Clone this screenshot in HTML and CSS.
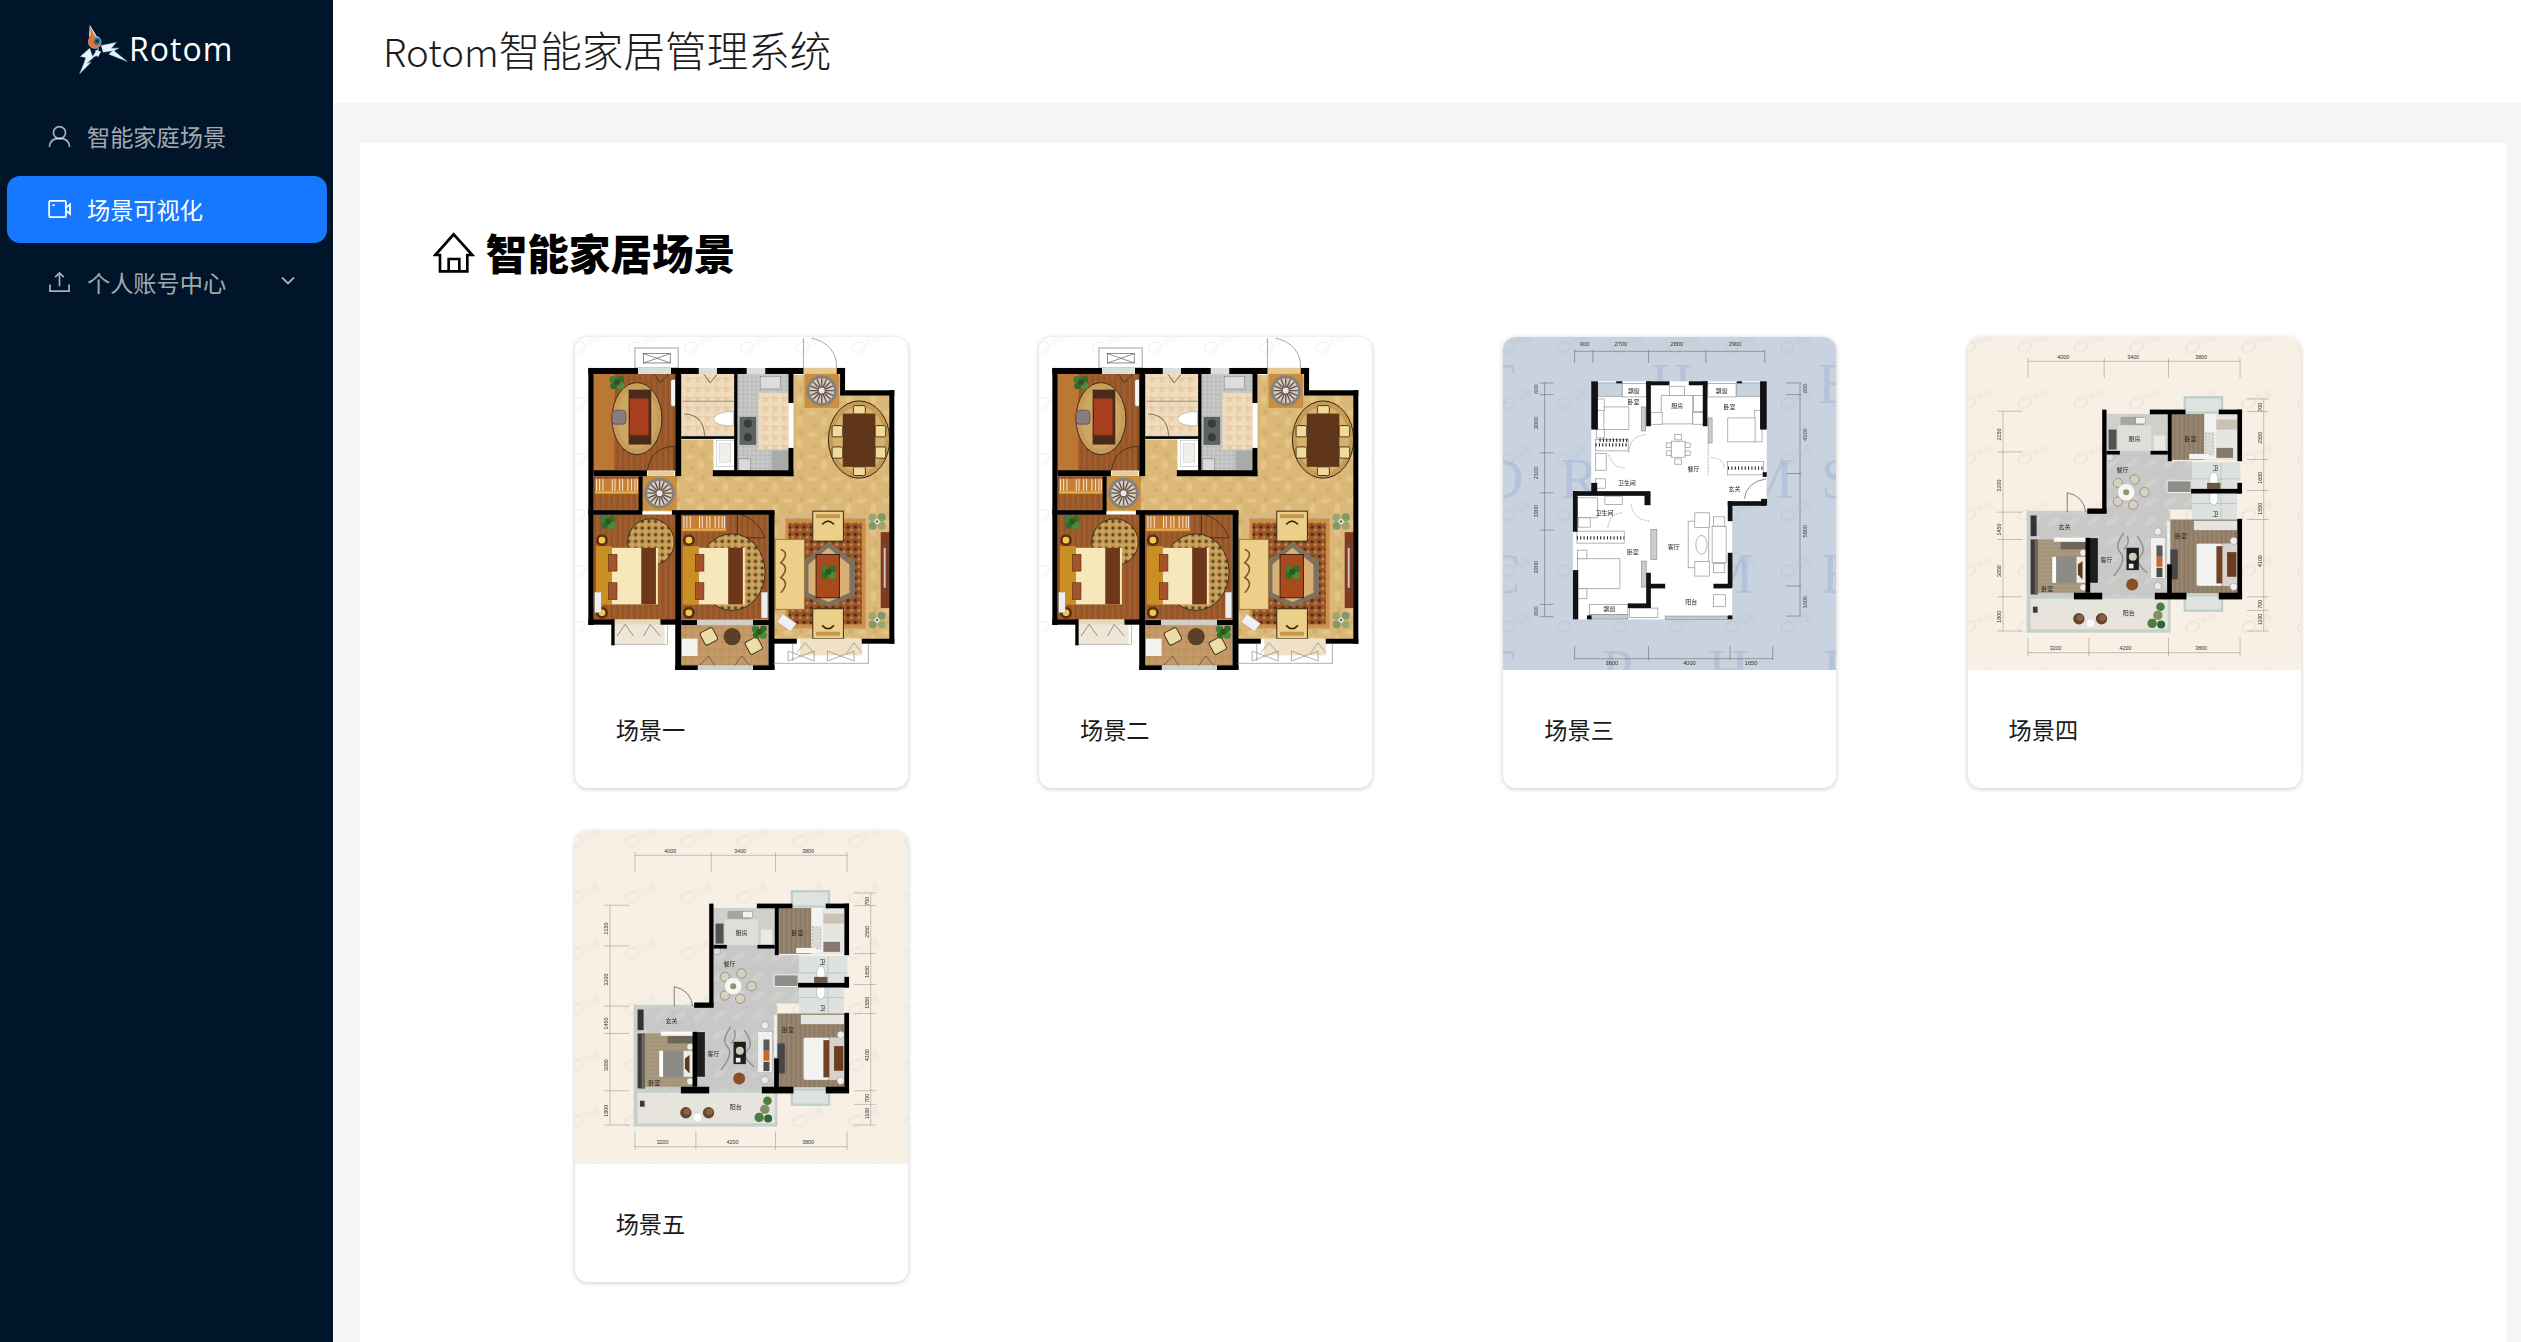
FILE: index.html
```html
<!DOCTYPE html>
<html lang="zh-CN">
<head>
<meta charset="utf-8">
<title>Rotom智能家居管理系统</title>
<link rel="stylesheet" href="styles.css">
</head>
<body>
<svg class="defs" width="0" height="0" aria-hidden="true">
  <defs>
    <pattern id="wood" width="17" height="40" patternUnits="userSpaceOnUse">
      <rect width="17" height="40" fill="#9c5a2b"/><rect width="3" height="40" fill="#8c4f25"/><rect x="9" width="2" height="40" fill="#a9642f"/>
    </pattern>
    <pattern id="tile" width="29" height="29" patternUnits="userSpaceOnUse">
      <rect width="29" height="29" fill="#f0dcbc"/><rect x="2" y="2" width="12" height="12" fill="#e8cca4"/><path d="M0 0H29M0 0V29" stroke="#d2b28a" stroke-width="2"/>
    </pattern>
    <pattern id="floral" width="74" height="66" patternUnits="userSpaceOnUse">
      <rect width="74" height="66" fill="#dcb878"/>
      <ellipse cx="18" cy="16" rx="14" ry="7" fill="#e4c588"/><ellipse cx="52" cy="40" rx="9" ry="14" fill="#e4c588"/><ellipse cx="24" cy="50" rx="7" ry="5" fill="#d2ad69"/><ellipse cx="58" cy="11" rx="6" ry="8" fill="#d2ad69"/>
    </pattern>
    <pattern id="granite" width="13" height="13" patternUnits="userSpaceOnUse">
      <rect width="13" height="13" fill="#c3c3c1"/><circle cx="3" cy="4" r="2" fill="#a8a8a6"/><circle cx="9" cy="10" r="2" fill="#dadad8"/>
    </pattern>
    <pattern id="rug" width="22" height="22" patternUnits="userSpaceOnUse">
      <rect width="22" height="22" fill="#99552a"/><circle cx="6" cy="7" r="5" fill="#55291a"/><circle cx="16" cy="16" r="4" fill="#c98d4c"/>
    </pattern>
    <pattern id="pebble" width="20" height="20" patternUnits="userSpaceOnUse">
      <rect width="20" height="20" fill="#c99a52"/><circle cx="6" cy="6" r="5" fill="#4a4328"/><circle cx="16" cy="15" r="3" fill="#dcb974"/>
    </pattern>
    <pattern id="marble" width="58" height="58" patternUnits="userSpaceOnUse">
      <rect width="58" height="58" fill="#c8c9c7"/><ellipse cx="20" cy="26" rx="24" ry="9" fill="#cfd0ce" transform="rotate(-35 20 26)"/><path d="M0 0H58M0 0V58" stroke="#bebfbd" stroke-width="1"/>
    </pattern>
    <pattern id="balcony-tile" width="22" height="22" patternUnits="userSpaceOnUse">
      <rect width="22" height="22" fill="#c49b68"/><path d="M0 0H22M0 0V22" stroke="#a67c4b" stroke-width="2"/>
    </pattern>
    <pattern id="grey-wood" width="14" height="24" patternUnits="userSpaceOnUse">
      <rect width="14" height="24" fill="#93806a"/><rect width="2" height="24" fill="#857360"/><rect x="7" width="2" height="24" fill="#a08e78"/>
    </pattern>
    <pattern id="grey-wood-h" width="24" height="12" patternUnits="userSpaceOnUse">
      <rect width="24" height="12" fill="#a8997f"/><rect width="24" height="2" fill="#968770"/>
    </pattern>
    <pattern id="mark" x="20" y="20" width="168" height="168" patternUnits="userSpaceOnUse">
      <g transform="rotate(-25 40 60)" class="mark-group">
        <ellipse cx="34" cy="60" rx="20" ry="15"/>
        <text x="60" y="68" class="mark-text">乐居</text>
      </g>
    </pattern>

    <g id="plant">
      <circle cx="-12" cy="-8" r="11" fill="#3f7d35"/><circle cx="12" cy="-9" r="10" fill="#2f6d2d"/><circle cx="-10" cy="11" r="10" fill="#2f6d2d"/><circle cx="11" cy="11" r="11" fill="#4a8c3c"/><circle r="9" fill="#23591f"/>
    </g>
    <g id="plant-pale">
      <circle cx="-14" cy="-12" r="12" fill="#9aa771"/><circle cx="14" cy="-13" r="12" fill="#7f9a68"/><circle cx="-13" cy="13" r="12" fill="#7f9a68"/><circle cx="14" cy="13" r="12" fill="#9aa771"/><circle r="8" fill="#dfe2c9"/><circle r="3" fill="#333"/>
    </g>
    <g id="wheel">
      <rect x="-52" y="-52" width="104" height="104" fill="#c98f3f"/>
      <circle r="46" fill="#8a7f80"/><circle r="37" fill="#d9cdbb"/>
      <path d="M-37 0H37M0-37V37M-26-26L26 26M-26 26L26-26M-14-34L14 34M14-34L-14 34M-34-14L34 14M-34 14L34-14" stroke="#5f5053" stroke-width="4"/>
      <circle r="9" fill="#efe6d7"/>
    </g>
    <g id="hangers">
      <rect x="0" y="0" width="132" height="46" fill="#c97f33"/>
      <path d="M5 0V36M14 0V36M24 0V36M52 0V36M60 0V36M74 0V36M83 0V36M99 0V36M110 0V36M120 0V36M127 0V36" stroke="#f2eadc" stroke-width="3"/>
      <rect y="38" width="132" height="5" fill="#e8b845"/>
    </g>
    <g id="bed1">
      <rect x="0" y="0" width="48" height="176" fill="#c98f24"/>
      <circle cx="18" cy="-18" r="14" fill="#f3c752" stroke="#5b3010" stroke-width="8"/><circle cx="18" cy="200" r="14" fill="#f3c752" stroke="#5b3010" stroke-width="8"/>
      <rect x="48" y="5" width="138" height="170" fill="#f6e8bb"/>
      <rect x="136" y="5" width="44" height="170" fill="#6d3719"/>
      <rect x="38" y="25" width="25" height="50" fill="#a4532a" stroke="#5c2f16" stroke-width="2"/>
      <rect x="38" y="110" width="25" height="50" fill="#a4532a" stroke="#5c2f16" stroke-width="2"/>
    </g>
    <g id="armchair">
      <rect width="92" height="90" fill="#ecd08a" stroke="#3c2a14" stroke-width="3"/>
      <rect x="10" y="9" width="72" height="12" fill="#c49a4f"/>
      <path d="M28 40 Q46 20 64 40" fill="none" stroke="#3c2a14" stroke-width="5"/>
    </g>
    <g id="chair4">
      <circle r="17" fill="#65452f"/><circle cx="3" cy="-3" r="10" fill="#8a6344"/>
    </g>
    <g id="bay-win">
      <rect width="112" height="46" fill="#dfe3df" stroke="#bfd0cc" stroke-width="7"/>
    </g>

    <symbol id="plan-one" viewBox="44 52 1000 1000">
      <rect x="44" y="52" width="1000" height="1000" fill="#fff"/>
      <rect x="44" y="52" width="1000" height="1000" fill="url(#mark)"/>
      <rect x="224" y="85" width="130" height="60" fill="#fff" stroke="#b8b8b8" stroke-width="4"/>
      <rect x="250" y="102" width="80" height="28" fill="#fff" stroke="#555" stroke-width="2"/>
      <path d="M250 102L330 130M330 102L250 130" stroke="#555" stroke-width="2"/>
      <path d="M730 55V145M755 55Q830 75 830 145" fill="none" stroke="#aaa" stroke-width="3"/>
      <path d="M363 360H460V468H700V165H840V228H990V958H640V575H245V470H363Z" fill="url(#floral)"/>
      <rect x="100" y="163" width="245" height="290" fill="url(#wood)"/>
      <rect x="100" y="163" width="62" height="290" fill="#bd7734"/>
      <rect x="100" y="470" width="136" height="103" fill="url(#wood)"/>
      <rect x="100" y="585" width="246" height="316" fill="url(#wood)"/>
      <rect x="363" y="585" width="262" height="316" fill="url(#wood)"/>
      <rect x="363" y="163" width="160" height="188" fill="url(#tile)"/>
      <rect x="532" y="163" width="153" height="290" fill="url(#granite)"/>
      <rect x="595" y="220" width="90" height="170" fill="url(#tile)"/>
      <rect x="363" y="917" width="262" height="122" fill="url(#balcony-tile)"/>
      <rect x="163" y="915" width="150" height="60" fill="#f0e6d7"/>
      <path d="M153 975H322V918" fill="none" stroke="#bbb" stroke-width="3"/>
      <ellipse cx="230" cy="297" rx="75" ry="108" fill="#c79c5a" stroke="#3b2d22" stroke-width="3"/>
      <ellipse cx="230" cy="297" rx="60" ry="92" fill="#cda761"/>
      <rect x="205" y="210" width="68" height="165" fill="#4a2b1b"/>
      <rect x="209" y="237" width="56" height="110" fill="#a73f1f"/>
      <rect x="155" y="272" width="42" height="42" rx="10" fill="#8a7c7b" stroke="#4c4140" stroke-width="2"/>
      <use href="#plant" x="170" y="188"/>
      <rect x="332" y="180" width="22" height="80" rx="6" fill="#f4f4f0" stroke="#777"/>
      <path d="M278 158L300 190L330 158M262 452Q270 385 342 380V452" fill="none" stroke="#2a1c10" stroke-width="2"/>
      <path d="M367 245H522" stroke="#8a9a8a" stroke-width="3"/>
      <path d="M372 283Q430 285 433 348M432 165L450 190L470 165" fill="none" stroke="#333" stroke-width="2"/>
      <path d="M460 300Q465 276 520 276V318Q470 322 460 300Z" fill="#fff" stroke="#666"/>
      <rect x="468" y="362" width="54" height="78" fill="#fff" stroke="#888"/>
      <rect x="478" y="372" width="34" height="56" fill="#f0efe9" stroke="#aaa"/>
      <rect x="538" y="292" width="50" height="84" fill="#5c6264"/>
      <circle cx="563" cy="312" r="12" fill="#363b3d"/><circle cx="563" cy="353" r="12" fill="#363b3d"/>
      <rect x="634" y="393" width="52" height="58" fill="#a9aaaa"/>
      <rect x="534" y="418" width="38" height="34" fill="#d9d9d5" stroke="#444"/>
      <rect x="600" y="170" width="60" height="38" fill="#ddd" stroke="#555"/>
      <ellipse cx="897" cy="360" rx="92" ry="116" fill="#c79b53" stroke="#33261a" stroke-width="3"/>
      <ellipse cx="897" cy="360" rx="78" ry="100" fill="#d7b26c"/>
      <g fill="#eeda9f" stroke="#4c3820" stroke-width="3">
        <rect x="880" y="258" width="36" height="26" rx="5"/><rect x="880" y="442" width="36" height="26" rx="5"/>
        <rect x="816" y="318" width="32" height="34" rx="5"/><rect x="816" y="382" width="32" height="34" rx="5"/>
        <rect x="945" y="318" width="32" height="34" rx="5"/><rect x="945" y="382" width="32" height="34" rx="5"/>
      </g>
      <rect x="848" y="282" width="98" height="160" fill="#60361b"/>
      <use href="#wheel" x="785" y="213"/>
      <use href="#wheel" x="298" y="521"/>
      <use href="#hangers" x="104" y="478"/>
      <use href="#hangers" x="366" y="590"/>
      <path d="M532 582Q590 595 615 655H532Z" fill="none" stroke="#2a1c10" stroke-width="2"/>
      <circle cx="272" cy="668" r="70" fill="url(#pebble)" stroke="#3b2d22" stroke-width="3"/>
      <use href="#plant" x="143" y="607"/>
      <use href="#bed1" x="107" y="680"/>
      <rect x="103" y="818" width="20" height="62" fill="#eee" stroke="#777"/>
      <ellipse cx="515" cy="758" rx="100" ry="115" fill="url(#pebble)" stroke="#3b2d22" stroke-width="3"/>
      <use href="#bed1" x="368" y="680"/>
      <rect x="603" y="818" width="20" height="78" fill="#eee" stroke="#777"/>
      <circle cx="516" cy="952" r="26" fill="#5a4029"/>
      <rect x="425" y="930" width="42" height="42" rx="7" fill="#ecdca8" stroke="#4c3820" stroke-width="3" transform="rotate(-28 446 951)"/>
      <rect x="560" y="958" width="42" height="42" rx="7" fill="#ecdca8" stroke="#4c3820" stroke-width="3" transform="rotate(-28 581 979)"/>
      <rect x="365" y="958" width="47" height="52" fill="#f3f3f0"/>
      <use href="#plant" x="598" y="937"/>
      <path d="M417 1040L445 1010L465 1040M522 1040L545 1010L570 1040" fill="none" stroke="#444" stroke-width="2"/>
      <rect x="676" y="598" width="240" height="328" fill="#cd8f46" stroke="#b9a27c" stroke-width="3"/>
      <rect x="685" y="610" width="220" height="305" fill="url(#rug)"/>
      <path d="M805 668L885 725V830L805 862L730 830V725Z" fill="#7f705f"/>
      <path d="M805 685L868 735V820L805 848L745 820V735Z" fill="#d6b076"/>
      <rect x="768" y="705" width="70" height="130" fill="#a84a1c" stroke="#3c1f10" stroke-width="3"/>
      <use href="#plant" x="805" y="757"/>
      <rect x="645" y="660" width="88" height="210" fill="#ecd08a" stroke="#9c7c41" stroke-width="3"/>
      <path d="M662 690Q690 700 662 730Q690 745 662 775Q690 790 662 820" fill="none" stroke="#7a5c2a" stroke-width="5"/>
      <use href="#armchair" x="758" y="575"/>
      <g transform="translate(850 958) rotate(180)"><use href="#armchair"/></g>
      <rect x="962" y="638" width="27" height="228" fill="#7c3b23"/>
      <rect x="971" y="685" width="6" height="120" fill="#c8c8c8"/>
      <use href="#plant-pale" x="951" y="606"/>
      <use href="#plant-pale" x="951" y="902"/>
      <rect x="655" y="895" width="50" height="30" fill="#f0f0ee" stroke="#888" transform="rotate(35 680 910)"/>
      <rect x="720" y="958" width="185" height="50" fill="#efe0c6"/>
      <g fill="#000">
        <rect x="84" y="145" width="16" height="772"/>
        <rect x="84" y="145" width="150" height="18"/>
        <rect x="332" y="145" width="84" height="18"/>
        <rect x="470" y="145" width="90" height="18"/>
        <rect x="615" y="145" width="240" height="18"/>
        <rect x="345" y="145" width="18" height="325"/>
        <rect x="363" y="350" width="160" height="8"/>
        <rect x="522" y="145" width="10" height="325"/>
        <rect x="458" y="452" width="242" height="18"/>
        <rect x="685" y="145" width="15" height="105"/>
        <rect x="685" y="385" width="15" height="85"/>
        <rect x="100" y="452" width="160" height="18"/>
        <rect x="235" y="470" width="12" height="105"/>
        <rect x="84" y="572" width="162" height="14"/>
        <rect x="335" y="572" width="308" height="14"/>
        <rect x="345" y="575" width="18" height="340"/>
        <rect x="625" y="575" width="18" height="475"/>
        <rect x="345" y="900" width="18" height="152"/>
        <rect x="345" y="1038" width="68" height="14"/>
        <rect x="578" y="1038" width="65" height="14"/>
        <rect x="84" y="900" width="80" height="16"/>
        <rect x="300" y="900" width="60" height="16"/>
        <rect x="153" y="900" width="10" height="78"/>
        <rect x="363" y="902" width="48" height="15"/>
        <rect x="578" y="902" width="50" height="15"/>
        <rect x="840" y="145" width="15" height="83"/>
        <rect x="855" y="212" width="148" height="16"/>
        <rect x="988" y="212" width="15" height="761"/>
        <rect x="640" y="958" width="70" height="15"/>
        <rect x="905" y="958" width="98" height="15"/>
      </g>
      <g fill="#d9e0da">
        <rect x="234" y="145" width="98" height="18"/><rect x="416" y="145" width="54" height="18"/><rect x="560" y="145" width="55" height="18"/>
      </g>
      <rect x="730" y="145" width="100" height="18" fill="#e5c98f"/>
      <rect x="163" y="900" width="137" height="16" fill="#e8d9bd"/>
      <rect x="412" y="902" width="166" height="15" fill="#cfcfc8"/>
      <rect x="413" y="1038" width="165" height="14" fill="#c9d5d0"/>
      <rect x="262" y="455" width="80" height="14" fill="#e4cf96"/>
      <path d="M170 950L195 915L220 950M250 950L270 915L300 950" fill="none" stroke="#666" stroke-width="2"/>
      <g fill="none" stroke="#888" stroke-width="2">
        <path d="M640 1032H925V973M698 973V1025"/>
        <path d="M710 1000L735 970L760 1000M684 1025V995L762 1025V995ZM802 1025V995L882 1025V995ZM860 1000L882 970L905 1000"/>
      </g>
    </symbol>

    <symbol id="plan-three" viewBox="40 52 1000 1000">
      <rect x="40" y="52" width="1000" height="1000" fill="#c9d3df"/>
      <g class="plan3-letters">
        <text x="-28" y="250">T</text><text x="484" y="250">H</text><text x="985" y="250">E</text>
        <text x="-22" y="535">D</text><text x="212" y="535">R</text><text x="760" y="535">M</text><text x="995" y="535">S</text>
        <text x="-22" y="822">C</text><text x="640" y="822">M</text><text x="995" y="822">E</text>
        <text x="-28" y="1108">T</text><text x="335" y="1108">P</text><text x="655" y="1108">H</text><text x="1000" y="1108">E</text>
      </g>
      <rect x="40" y="52" width="1000" height="1000" fill="url(#mark)"/>
      <g fill="none" stroke="#6f7881" stroke-width="2">
        <path d="M255 95H826M255 90V130M310 90V130M477 90V130M649 90V130M826 90V130"/>
        <path d="M165 190V892M150 190H192M150 225H192M150 400H192M150 520H192M150 632H192M150 855H192M150 892H192"/>
        <path d="M932 190V890M890 190H936M890 225H936M890 462H936M890 800H936M890 890H936"/>
        <path d="M255 1018H850M255 980V1022M477 980V1022M722 980V1022M850 980V1022"/>
      </g>
      <g class="plan-dim">
        <text x="285" y="80">900</text><text x="394" y="80">2700</text><text x="562" y="80">2800</text><text x="737" y="80">2900</text>
        <text x="367" y="1037">3600</text><text x="600" y="1037">4000</text><text x="785" y="1037">1650</text>
        <text transform="translate(145 208) rotate(-90)">600</text>
        <text transform="translate(145 310) rotate(-90)">3000</text>
        <text transform="translate(145 460) rotate(-90)">2100</text>
        <text transform="translate(145 575) rotate(-90)">1900</text>
        <text transform="translate(145 743) rotate(-90)">3900</text>
        <text transform="translate(145 875) rotate(-90)">600</text>
        <text transform="translate(954 206) rotate(-90)">600</text>
        <text transform="translate(954 345) rotate(-90)">4100</text>
        <text transform="translate(954 635) rotate(-90)">5800</text>
        <text transform="translate(954 848) rotate(-90)">1600</text>
      </g>
      <path d="M305 185H832V558H728V900H250V517H305Z" fill="#fff"/>
      <g fill="#fff" stroke="#8a8f92" stroke-width="2">
        <rect x="325" y="190" width="73" height="40" fill="#c9d3df"/>
        <rect x="398" y="192" width="72" height="40"/>
        <rect x="655" y="192" width="85" height="40"/>
        <rect x="742" y="190" width="72" height="40" fill="#c9d3df"/>
        <rect x="515" y="228" width="95" height="85"/>
        <rect x="540" y="200" width="45" height="28"/>
        <rect x="612" y="228" width="30" height="48"/>
        <rect x="484" y="278" width="34" height="36"/>
        <rect x="610" y="278" width="32" height="36"/>
        <rect x="456" y="262" width="12" height="72" fill="#ccc"/>
        <rect x="656" y="295" width="12" height="75" fill="#ccc"/>
        <rect x="343" y="262" width="75" height="68"/>
        <rect x="320" y="238" width="24" height="35"/>
        <rect x="320" y="330" width="24" height="25"/>
        <rect x="796" y="272" width="22" height="95"/>
        <rect x="715" y="295" width="82" height="72"/>
        <rect x="318" y="360" width="98" height="34"/>
        <rect x="714" y="426" width="108" height="40"/>
        <rect x="318" y="402" width="32" height="50"/>
        <rect x="318" y="478" width="30" height="28"/>
        <rect x="264" y="535" width="60" height="60"/>
        <rect x="346" y="530" width="52" height="25"/>
        <rect x="266" y="595" width="36" height="28"/>
        <rect x="262" y="635" width="142" height="36"/>
        <rect x="264" y="718" width="127" height="90"/>
        <rect x="264" y="692" width="28" height="26"/>
        <rect x="264" y="808" width="28" height="30"/>
        <rect x="456" y="725" width="14" height="78" fill="#ccc"/>
        <rect x="484" y="630" width="18" height="90" fill="#ccc"/>
        <rect x="596" y="605" width="62" height="140"/>
        <rect x="616" y="580" width="44" height="44"/>
        <rect x="616" y="726" width="44" height="44"/>
        <rect x="668" y="620" width="42" height="110"/>
        <rect x="672" y="592" width="34" height="28"/>
        <rect x="672" y="732" width="34" height="28"/>
        <ellipse cx="636" cy="676" rx="17" ry="28"/>
        <rect x="545" y="365" width="42" height="48"/>
        <rect x="530" y="370" width="15" height="14"/><rect x="530" y="394" width="15" height="14"/>
        <rect x="587" y="370" width="15" height="14"/><rect x="587" y="394" width="15" height="14"/>
        <rect x="556" y="345" width="20" height="16"/><rect x="556" y="418" width="20" height="16"/>
        <rect x="672" y="826" width="36" height="36"/>
        <rect x="300" y="855" width="115" height="30"/>
        <rect x="420" y="866" width="85" height="28"/>
        <rect x="527" y="890" width="188" height="10" fill="#c9c9c9"/>
        <rect x="300" y="885" width="115" height="14" fill="#c9c9c9"/>
      </g>
      <path d="M330 362H416M318 376H416M262 655H404M716 446H822" stroke="#111" stroke-width="10" stroke-dasharray="3 7" fill="none"/>
      <g fill="none" stroke="#777" stroke-width="2" stroke-dasharray="4 3">
        <path d="M468 345Q420 350 418 400M358 405Q370 445 405 445M425 555Q430 600 482 605M665 415Q700 415 705 445M355 625Q360 580 400 580"/>
        <path d="M656 370V470"/>
      </g>
      <path d="M830 478Q770 488 765 538" fill="none" stroke="#555" stroke-width="2"/>
      <g fill="#111">
        <rect x="305" y="185" width="20" height="145"/>
        <rect x="380" y="185" width="18" height="6"/>
        <rect x="305" y="490" width="18" height="35"/>
        <rect x="250" y="515" width="233" height="14"/>
        <rect x="465" y="527" width="18" height="30"/>
        <rect x="250" y="515" width="14" height="122"/>
        <rect x="250" y="752" width="16" height="148"/>
        <rect x="470" y="185" width="14" height="135"/>
        <rect x="470" y="185" width="70" height="12"/>
        <rect x="598" y="185" width="56" height="12"/>
        <rect x="640" y="185" width="14" height="135"/>
        <rect x="812" y="185" width="20" height="145"/>
        <rect x="742" y="185" width="16" height="6"/>
        <rect x="820" y="458" width="12" height="14"/>
        <rect x="815" y="538" width="18" height="20"/>
        <rect x="715" y="545" width="115" height="14"/>
        <rect x="715" y="545" width="14" height="60"/>
        <rect x="715" y="700" width="14" height="105"/>
        <rect x="482" y="793" width="45" height="14"/>
        <rect x="672" y="793" width="55" height="14"/>
        <rect x="470" y="760" width="14" height="105"/>
        <rect x="415" y="852" width="68" height="14"/>
        <rect x="292" y="888" width="14" height="12"/>
        <rect x="715" y="888" width="14" height="12"/>
      </g>
      <g class="plan-label">
        <text x="433" y="221">飘窗</text><text x="697" y="221">飘窗</text><text x="360" y="875">飘窗</text>
        <text x="432" y="254">卧室</text><text x="563" y="264">厨房</text><text x="720" y="269">卧室</text>
        <text x="612" y="453">餐厅</text><text x="412" y="496">卫生间</text><text x="735" y="516">玄关</text>
        <text x="345" y="586">卫生间</text><text x="430" y="704">卧室</text><text x="553" y="690">客厅</text><text x="605" y="854">阳台</text>
      </g>
    </symbol>

    <symbol id="plan-four" viewBox="52 52 1000 1000">
      <rect x="52" y="52" width="1000" height="1000" fill="#f8f0e4"/>
      <rect x="52" y="52" width="1000" height="1000" fill="url(#mark)"/>
      <g fill="none" stroke="#8d8a82" stroke-width="1.5">
        <path d="M232 125H870M232 115V175M461 115V175M654 115V175M869 115V175"/>
        <path d="M232 1000H870M232 955V1010M415 955V1010M654 955V1010M869 955V1010"/>
        <path d="M157 275V935M140 275H215M140 397H215M140 578H215M140 660H215M140 832H215M140 935H215"/>
        <path d="M940 238V935M890 238H955M890 276H955M890 420H955M890 513H955M890 600H955M890 832H955M890 873H955M890 935H955"/>
      </g>
      <g class="plan-dim plan-dim-small">
        <text x="338" y="118">4000</text><text x="548" y="118">3400</text><text x="752" y="118">3800</text>
        <text x="315" y="991">3200</text><text x="525" y="991">4200</text><text x="752" y="991">3800</text>
        <text transform="translate(151 345) rotate(-90)">2150</text>
        <text transform="translate(151 498) rotate(-90)">3200</text>
        <text transform="translate(151 630) rotate(-90)">1450</text>
        <text transform="translate(151 755) rotate(-90)">3050</text>
        <text transform="translate(151 892) rotate(-90)">1800</text>
        <text transform="translate(935 263) rotate(-90)">700</text>
        <text transform="translate(935 355) rotate(-90)">2550</text>
        <text transform="translate(935 475) rotate(-90)">1650</text>
        <text transform="translate(935 568) rotate(-90)">1550</text>
        <text transform="translate(935 725) rotate(-90)">4100</text>
        <text transform="translate(935 855) rotate(-90)">700</text>
        <text transform="translate(935 900) rotate(-90)">1100</text>
      </g>
      <rect x="228" y="574" width="432" height="366" fill="#c7d0cc"/>
      <rect x="240" y="838" width="412" height="92" fill="#e6e4dc"/>
      <path d="M468 283H655V425H725V570H655V830H240V586H468Z" fill="url(#marble)"/>
      <rect x="468" y="283" width="184" height="112" fill="#cfcfcc"/>
      <rect x="502" y="318" width="100" height="76" fill="#dfdedb"/>
      <rect x="474" y="330" width="24" height="60" fill="#54524e"/>
      <rect x="510" y="292" width="70" height="24" fill="#a7a5a1"/>
      <rect x="555" y="293" width="30" height="20" fill="#f2f2ef" stroke="#555"/>
      <rect x="610" y="348" width="34" height="44" fill="#e9e9e7"/>
      <rect x="664" y="283" width="198" height="138" fill="#e6e5e2"/>
      <rect x="664" y="283" width="98" height="138" fill="url(#grey-wood)"/>
      <rect x="762" y="283" width="34" height="135" fill="#f3f3f1"/>
      <rect x="765" y="340" width="25" height="66" fill="#d9d9d6" stroke="#333" stroke-dasharray="4 6"/>
      <rect x="798" y="300" width="62" height="30" fill="#c9c2b5"/>
      <rect x="798" y="385" width="50" height="30" fill="#85796d"/>
      <rect x="716" y="403" width="60" height="16" fill="#f5f5f3"/>
      <rect x="725" y="428" width="145" height="80" fill="#dde1e0"/>
      <rect x="725" y="520" width="135" height="80" fill="#dde1e0"/>
      <path d="M725 478H870M812 428V508M725 552H860M812 520V600" stroke="#b4bab8" stroke-width="2"/>
      <ellipse cx="790" cy="480" rx="13" ry="22" fill="#fff" stroke="#666"/>
      <ellipse cx="790" cy="535" rx="13" ry="22" fill="#fff" stroke="#666"/>
      <rect x="770" y="490" width="40" height="18" fill="#6e5641"/>
      <rect x="650" y="484" width="72" height="35" fill="#8f8d89" stroke="#eee" stroke-width="3"/>
      <rect x="660" y="600" width="202" height="222" fill="url(#grey-wood)"/>
      <rect x="730" y="604" width="130" height="28" fill="#e5e4e0"/>
      <rect x="650" y="605" width="8" height="125" fill="#f1f1ee"/>
      <rect x="660" y="690" width="22" height="90" fill="#44464a"/>
      <rect x="738" y="672" width="78" height="128" fill="#f2f2f0" stroke="#888" rx="6"/>
      <rect x="798" y="680" width="25" height="112" fill="#714326"/>
      <rect x="816" y="672" width="44" height="128" fill="#d8d3ca"/>
      <rect x="830" y="698" width="28" height="74" fill="#6c3c1f"/>
      <circle cx="850" cy="664" r="11" fill="#efeeea" stroke="#666"/><circle cx="850" cy="802" r="11" fill="#efeeea" stroke="#666"/>
      <rect x="262" y="660" width="150" height="160" fill="url(#grey-wood-h)"/>
      <rect x="310" y="655" width="100" height="12" fill="#f5f5f2"/>
      <rect x="330" y="668" width="80" height="22" fill="#6d645a"/>
      <rect x="305" y="712" width="12" height="78" fill="#fff"/>
      <rect x="317" y="712" width="62" height="78" fill="#8d8b88"/>
      <rect x="378" y="712" width="30" height="78" fill="#efece6"/>
      <path d="M382 735L396 725V780L382 765Z" fill="#5d3a1e"/>
      <circle cx="398" cy="700" r="10" fill="#f1efea" stroke="#666"/><circle cx="398" cy="804" r="10" fill="#f1efea" stroke="#666"/>
      <rect x="240" y="588" width="18" height="62" fill="#333"/>
      <rect x="240" y="660" width="22" height="165" fill="#3a3a38"/>
      <rect x="252" y="660" width="10" height="165" fill="#6e675c"/>
      <rect x="316" y="655" width="92" height="5" fill="#fff"/>
      <rect x="412" y="656" width="30" height="134" fill="#1f1f1f"/>
      <path d="M520 640Q490 680 510 700T490 770M560 650Q590 690 570 710T590 760M530 650Q540 670 520 690" fill="none" stroke="#8b8b8f" stroke-width="4"/>
      <rect x="528" y="685" width="37" height="67" fill="#1e1e1e"/>
      <circle cx="547" cy="712" r="12" fill="#c9cdb9"/>
      <rect x="535" y="733" width="14" height="14" fill="#eee"/>
      <rect x="600" y="655" width="44" height="122" fill="#f0f0ee" stroke="#999"/>
      <rect x="618" y="678" width="18" height="34" fill="#5a5a58"/>
      <rect x="618" y="712" width="18" height="30" fill="#c7692c"/>
      <rect x="618" y="745" width="18" height="28" fill="#4d4c4a"/>
      <circle cx="545" cy="795" r="18" fill="#8d4f2b"/>
      <circle cx="622" cy="800" r="11" fill="#ecebe8" stroke="#666"/><circle cx="622" cy="636" r="11" fill="#ecebe8" stroke="#666"/>
      <g fill="#d8d1bf" stroke="#7d7668" stroke-width="2">
        <circle cx="502" cy="490" r="14"/><circle cx="552" cy="480" r="14"/><circle cx="582" cy="518" r="14"/><circle cx="548" cy="556" r="14"/><circle cx="502" cy="546" r="14"/>
      </g>
      <circle cx="527" cy="518" r="26" fill="#f6f6f3" stroke="#999"/>
      <circle cx="527" cy="518" r="9" fill="#8d9279"/>
      <circle cx="478" cy="412" r="12" fill="#ddd" stroke="#666"/>
      <rect x="244" y="855" width="26" height="34" fill="#e4e2da"/><rect x="247" y="862" width="14" height="18" fill="#3b3a38"/>
      <use href="#chair4" x="385" y="898"/><use href="#chair4" x="453" y="898"/>
      <circle cx="420" cy="912" r="14" fill="#fbfbf8" stroke="#aaa"/>
      <g fill="#4b7c41"><circle cx="630" cy="862" r="13"/><circle cx="622" cy="888" r="14" fill="#7f8f63"/><circle cx="605" cy="912" r="14"/><circle cx="632" cy="915" r="12" fill="#2d6a33"/></g>
      <use href="#bay-win" x="703" y="233"/>
      <use href="#bay-win" x="703" y="828"/>
      <path d="M350 518V578M352 520Q398 530 406 578" fill="none" stroke="#444" stroke-width="2"/>
      <g fill="#000">
        <rect x="455" y="270" width="13" height="310"/>
        <rect x="410" y="567" width="58" height="16"/>
        <rect x="598" y="270" width="107" height="14"/>
        <rect x="805" y="270" width="70" height="14"/>
        <rect x="861" y="270" width="14" height="155"/>
        <rect x="861" y="490" width="14" height="32"/>
        <rect x="861" y="598" width="14" height="240"/>
        <rect x="652" y="280" width="12" height="145"/>
        <rect x="600" y="394" width="52" height="11"/>
        <rect x="468" y="394" width="40" height="11"/>
        <rect x="722" y="508" width="150" height="14"/>
        <rect x="370" y="820" width="85" height="20"/>
        <rect x="613" y="820" width="95" height="20"/>
        <rect x="805" y="820" width="70" height="20"/>
        <rect x="650" y="735" width="14" height="100"/>
        <rect x="405" y="655" width="14" height="165"/>
      </g>
      <g class="plan-label">
        <text x="552" y="363">厨房</text><text x="720" y="363">卧室</text><text x="795" y="451">卫</text>
        <text x="516" y="458">餐厅</text><text x="342" y="630">玄关</text><text x="795" y="591">卫</text>
        <text x="692" y="656">卧室</text><text x="468" y="728">客厅</text><text x="290" y="814">卧室</text><text x="535" y="888">阳台</text>
      </g>
    </symbol>
  </defs>
</svg>

<div class="app">
  <aside class="sidebar">
    <div class="brand">
      <svg class="brand-mark" viewBox="50 25 155 155" aria-hidden="true">
        <path d="M88 30L112 70L100 75L86 65Z" fill="#dfeef5"/>
        <path d="M60 125L88 100L96 125L114 100L112 122L102 125L80 145L92 142L58 176L72 142L76 128Z" fill="#e8f4f9" stroke="#8fc2dc" stroke-width="1.5"/>
        <path d="M122 92L167 83L152 100L175 100L160 108L200 140L145 118L156 108L128 112Z" fill="#e8f4f9" stroke="#8fc2dc" stroke-width="1.5"/>
        <path d="M122 110L112 128L104 106Z" fill="#dfeef5"/>
        <circle cx="103" cy="82" r="20" fill="#7fb4cc"/>
        <path d="M90 37L104 66Q120 72 119 88Q116 104 103 100Q84 98 83 80Q84 68 90 62Z" fill="#e0743a"/>
        <circle cx="110" cy="80" r="10" fill="#2c6f9c"/>
        <circle cx="110" cy="79" r="5" fill="#10324a"/>
      </svg>
      <span class="brand-name">Rotom</span>
    </div>
    <nav class="menu">
      <a class="menu-item">
        <svg class="menu-icon" viewBox="0 0 24 24" aria-hidden="true"><circle cx="12" cy="8" r="6.3"/><path d="M1.5 23C1.8 17 6 14 12 14S22.200 17 22.500 23"/></svg>
        <span class="menu-label">智能家庭场景</span>
      </a>
      <a class="menu-item is-active">
        <svg class="menu-icon" viewBox="0 0 24 24" aria-hidden="true"><rect x="1.200" y="3" width="17.500" height="17" rx="1"/><path d="M4.500 7.500H7"/><path d="M18.700 10L23 6.500V16.500L18.700 13"/></svg>
        <span class="menu-label">场景可视化</span>
      </a>
      <a class="menu-item">
        <svg class="menu-icon" viewBox="0 0 24 24" aria-hidden="true"><path d="M12 2V16M7.500 6.500L12 2L16.500 6.500"/><path d="M2 14V21H22V14"/></svg>
        <span class="menu-label">个人账号中心</span>
        <svg class="menu-arrow" viewBox="0 0 14 9" aria-hidden="true"><path d="M1 1.500L7 7.500L13 1.500"/></svg>
      </a>
    </nav>
  </aside>

  <main class="main">
    <header class="topbar"><h1 class="topbar-title"><span class="topbar-latin">Rotom</span>智能家居管理系统</h1></header>
    <section class="panel">
      <h2 class="panel-title">
        <svg class="home-icon" viewBox="200 700 125 125" aria-hidden="true"><path d="M207 769L262 707L318 769H303V818H221V769Z"/><path d="M247 818V781H279V818"/></svg>
        <span>智能家居场景</span>
      </h2>
      <div class="scene-grid">
        <article class="scene-card">
          <svg class="scene-img"><use href="#plan-one"/></svg>
          <p class="scene-name">场景一</p>
        </article>
        <article class="scene-card">
          <svg class="scene-img"><use href="#plan-one"/></svg>
          <p class="scene-name">场景二</p>
        </article>
        <article class="scene-card">
          <svg class="scene-img"><use href="#plan-three"/></svg>
          <p class="scene-name">场景三</p>
        </article>
        <article class="scene-card">
          <svg class="scene-img"><use href="#plan-four"/></svg>
          <p class="scene-name">场景四</p>
        </article>
        <article class="scene-card">
          <svg class="scene-img"><use href="#plan-four"/></svg>
          <p class="scene-name">场景五</p>
        </article>
      </div>
    </section>
  </main>
</div>
</body>
</html>
```

FILE: styles.css
```css
* { box-sizing: border-box; }

html, body {
  margin: 0;
  height: 100%;
  overflow: hidden;
}

body {
  font-family: "Noto Sans CJK SC", "Noto Sans", sans-serif;
  background: #f5f5f5;
}

.defs { position: absolute; }

.app {
  display: flex;
  height: 100vh;
}

.sidebar {
  flex: 0 0 333px;
  background: #001529;
  color: rgba(255, 255, 255, 0.65);
  padding: 23px 6px 0 7px;
}

.brand {
  display: flex;
  align-items: center;
  height: 52px;
  padding-left: 70px;
}

.brand-mark {
  width: 52px;
  height: 52px;
  flex: none;
}

.brand-name {
  font-family: "Open Sans", "Noto Sans", sans-serif;
  font-size: 32px;
  letter-spacing: 1px;
  color: #fff;
  line-height: 1;
  margin-top: -1px;
}

.menu {
  display: flex;
  flex-direction: column;
  gap: 6px;
  margin-top: 28px;
}

.menu-item {
  display: flex;
  align-items: center;
  height: 67px;
  padding: 0 32px 0 41px;
  border-radius: 13px;
  font-size: 23.2px;
}

.menu-item.is-active {
  background: #1677ff;
  color: #fff;
}

.menu-icon {
  width: 23px;
  height: 23px;
  flex: none;
  fill: none;
  stroke: currentColor;
  stroke-width: 1.8;
}

.menu-label {
  margin-left: 16px;
  flex: 1;
  line-height: 1;
}

.menu-arrow {
  width: 14px;
  height: 9px;
  flex: none;
  fill: none;
  stroke: currentColor;
  stroke-width: 1.8;
  margin-top: -4px;
}

.main {
  flex: 1;
  min-width: 0;
  display: flex;
  flex-direction: column;
}

.topbar {
  flex: 0 0 103px;
  background: #fff;
  display: flex;
  align-items: center;
  padding: 0 0 3px 50px;
}

.topbar-title {
  margin: 0;
  font-size: 41.6px;
  font-weight: 200;
  line-height: 1;
  color: #1c1c1c;
}

.topbar-latin {
  font-size: 38.4px;
}

.panel {
  flex: 1;
  margin: 40px 14px 0 27px;
  background: #fff;
  padding: 83px 0 0 73px;
}

.panel-title {
  display: flex;
  align-items: center;
  gap: 11px;
  margin: 0;
  height: 54px;
  font-size: 41.6px;
  font-weight: 900;
  line-height: 1;
  color: #000;
}

.home-icon {
  width: 41.67px;
  height: 41.67px;
  flex: none;
  fill: none;
  stroke: #000;
  stroke-width: 8;
}

.scene-grid {
  display: grid;
  grid-template-columns: repeat(4, 333px);
  column-gap: 131.3px;
  row-gap: 43px;
  margin: 57px 0 0 141.700px;
}

.scene-card {
  height: 451px;
  border-radius: 13px;
  background: #fff;
  overflow: hidden;
  box-shadow: 0 1px 5px rgba(0, 0, 0, 0.22);
}

.scene-img {
  display: block;
  width: 333px;
  height: 333px;
  filter: blur(0.6px);
}

.scene-name {
  margin: 0;
  padding: 2px 0 0 41px;
  height: 118px;
  display: flex;
  align-items: center;
  font-size: 23.2px;
  color: #1a1a1a;
  line-height: 1;
}

.mark-group { fill: none; stroke: #000; stroke-opacity: 0.05; stroke-width: 4; }
.mark-text { font-family: "Noto Sans CJK SC", sans-serif; font-size: 26px; fill: #000; fill-opacity: 0.05; stroke: none; }

.plan3-letters text {
  font-family: "Liberation Serif", serif;
  font-size: 172px;
  fill: #b4c3da;
}

.plan-dim text {
  font-family: "Liberation Sans", sans-serif;
  font-size: 17px;
  fill: #333;
  text-anchor: middle;
}

.plan-dim-small text { font-size: 16px; }

.plan-label text {
  font-family: "Noto Sans CJK SC", sans-serif;
  font-size: 18px;
  fill: #222;
  text-anchor: middle;
}
```
